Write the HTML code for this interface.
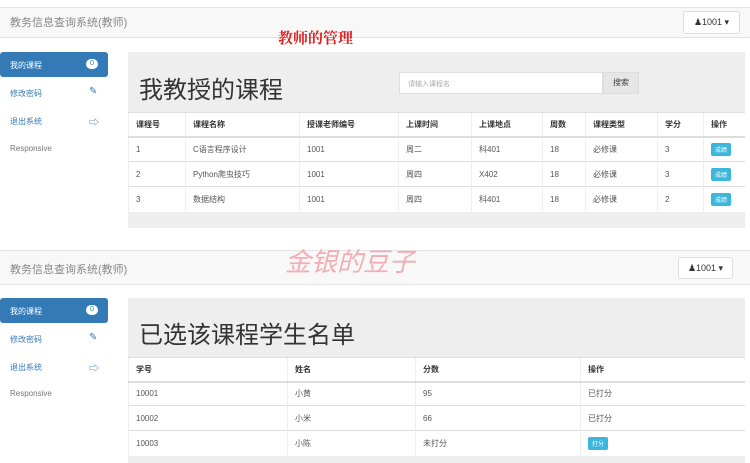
<!DOCTYPE html>
<html><head><meta charset="utf-8"><style>
*{margin:0;padding:0;box-sizing:border-box}
body{width:750px;height:463px;overflow:hidden;background:#fff;position:relative;font-family:"Liberation Sans","Noto Sans CJK SC",sans-serif;color:#555;font-size:8px}
.a{position:absolute}
.nav{background:#f8f8f8;border-top:1px solid #e4e4e4;border-bottom:1px solid #e4e4e4;left:0;width:750px}
.brand{font-size:11px;color:#888}
.btn{background:#fff;border:1px solid #ddd;border-radius:3px;font-size:9px;color:#333;text-align:center}
.act{background:#337ab7;border-radius:3px;left:0;width:108px;height:25px;color:#fff;font-size:8px;padding:8px 0 0 10px}
.badge{position:absolute;right:10px;top:7px;width:12px;height:10px;border-radius:5px;background:#fff;color:#337ab7;font-size:7px;text-align:center;line-height:10px}
.si{left:10px;font-size:8px;color:#337ab7}
.ic{color:#337ab7;font-size:10px}
.resp{left:10px;color:#777;font-size:8px}
.panel{background:#eee;left:128px;width:617px}
h1{font-weight:normal;color:#333;font-size:24px;position:absolute}
table{position:absolute;border-collapse:collapse;background:#fff;font-size:8px}
td,th{border-top:1px solid #ddd;border-left:1px solid #eee;text-align:left;padding:0 7px;color:#555;font-weight:normal}
th{color:#333;font-weight:bold;border-bottom:2px solid #ddd}
.bb{display:inline-block;background:#3bb6dc;color:#fff;font-size:6px;padding:2px 4px;border-radius:2px}
</style></head><body>
<!-- top -->
<div class="a nav" style="top:7px;height:31px"></div>
<div class="a brand" style="left:10px;top:14px">教务信息查询系统(教师)</div>
<div class="a btn" style="left:683px;top:11px;width:57px;height:23px;line-height:21px">&#9823;1001 ▾</div>
<div class="a" style="left:278px;top:27px;color:#e02020;font-family:'Noto Serif CJK SC',serif;font-weight:bold;font-size:15px">教师的管理</div>
<div class="a act" style="top:52px">我的课程<span class="badge">0</span></div>
<div class="a si" style="top:88px">修改密码</div><div class="a ic" style="left:89px;top:86px">✎</div>
<div class="a si" style="top:116px">退出系统</div><div class="a ic" style="left:89px;top:114px">⇨</div>
<div class="a resp" style="top:144px">Responsive</div>
<div class="a panel" style="top:52px;height:176px"></div>
<h1 style="left:139px;top:70px">我教授的课程</h1>
<div class="a" style="left:399px;top:72px;width:204px;height:22px;background:#fff;border:1px solid #ddd;font-size:7px;color:#aaa;padding:6px 8px">请输入课程名</div>
<div class="a" style="left:603px;top:72px;width:36px;height:22px;background:#e6e6e6;border:1px solid #ddd;font-size:8px;color:#444;text-align:center;line-height:20px">搜索</div>
<table style="left:128px;top:112px;width:617px">
<tr style="height:24px"><th style="width:57px">课程号</th><th style="width:114px">课程名称</th><th style="width:99px">授课老师编号</th><th style="width:73px">上课时间</th><th style="width:71px">上课地点</th><th style="width:43px">周数</th><th style="width:72px">课程类型</th><th style="width:46px">学分</th><th>操作</th></tr>
<tr style="height:25px"><td>1</td><td>C语言程序设计</td><td>1001</td><td>周二</td><td>科401</td><td>18</td><td>必修课</td><td>3</td><td><span class="bb">成绩</span></td></tr>
<tr style="height:25px"><td>2</td><td>Python爬虫技巧</td><td>1001</td><td>周四</td><td>X402</td><td>18</td><td>必修课</td><td>3</td><td><span class="bb">成绩</span></td></tr>
<tr style="height:25px"><td>3</td><td>数据结构</td><td>1001</td><td>周四</td><td>科401</td><td>18</td><td>必修课</td><td>2</td><td><span class="bb">成绩</span></td></tr>
</table>
<!-- bottom -->
<div class="a nav" style="top:250px;height:35px"></div>
<div class="a brand" style="left:10px;top:261px">教务信息查询系统(教师)</div>
<div class="a btn" style="left:678px;top:257px;width:55px;height:22px;line-height:20px">&#9823;1001 ▾</div>
<div class="a" style="left:285px;top:242px;color:#f2a0aa;font-style:italic;font-size:26px;opacity:.85">金银的豆子</div>
<div class="a act" style="top:298px">我的课程<span class="badge">0</span></div>
<div class="a si" style="top:334px">修改密码</div><div class="a ic" style="left:89px;top:332px">✎</div>
<div class="a si" style="top:362px">退出系统</div><div class="a ic" style="left:89px;top:360px">⇨</div>
<div class="a resp" style="top:389px">Responsive</div>
<div class="a panel" style="top:298px;height:165px"></div>
<h1 style="left:139px;top:315px">已选该课程学生名单</h1>
<table style="left:128px;top:357px;width:617px">
<tr style="height:24px"><th style="width:159px">学号</th><th style="width:128px">姓名</th><th style="width:165px">分数</th><th>操作</th></tr>
<tr style="height:24px"><td>10001</td><td>小黄</td><td>95</td><td>已打分</td></tr>
<tr style="height:25px"><td>10002</td><td>小米</td><td>66</td><td>已打分</td></tr>
<tr style="height:25px"><td>10003</td><td>小陈</td><td>未打分</td><td><span class="bb">打分</span></td></tr>
</table>
</body></html>
